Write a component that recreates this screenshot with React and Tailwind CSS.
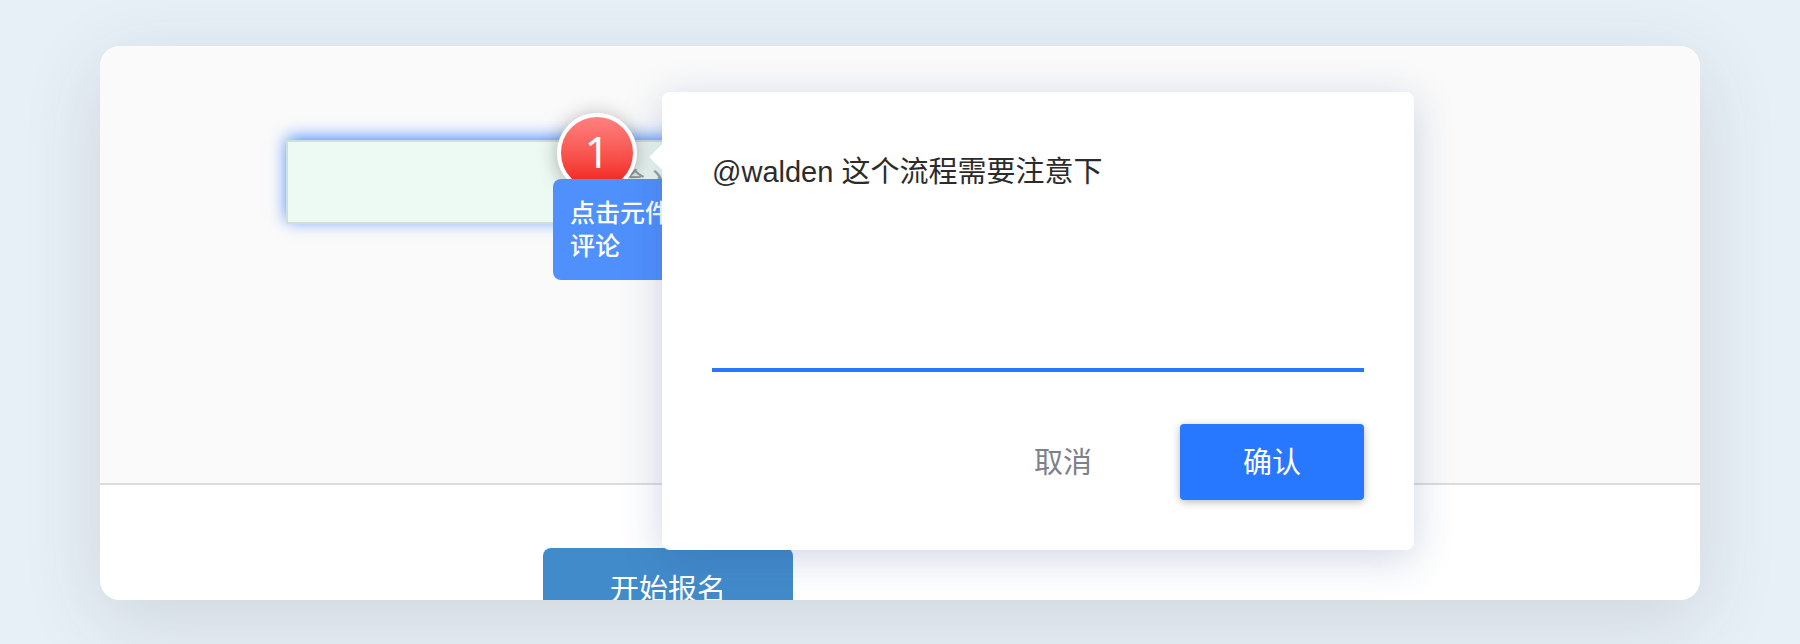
import React from 'react';

const CommentMarker = ({ count }) => (
  <div className="absolute top-[67px] left-[457px] w-20 h-20 pb-1 rounded-full border-4 border-white bg-gradient-to-b from-[#ff8080] to-[#ef0808] shadow-[0_2px_20px_rgba(0,0,0,0.3)] flex items-center justify-center">
    <span className="font-['Noto_Sans',sans-serif] text-[44px] leading-none text-white">{count}</span>
  </div>
);

const Tooltip = ({ lines }) => (
  <div className="absolute top-[133px] left-[453px] w-[180px] px-[17px] pt-[18px] pb-[17px] rounded-lg bg-[#5090fd] text-white text-[25px] leading-[33px] font-medium">
    {lines.map((line) => (
      <p key={line}>{line}</p>
    ))}
  </div>
);

const CommentDialog = () => (
  <form
    className="absolute top-[46px] left-[562px] w-[752px] p-[50px] rounded-lg bg-white shadow-[0_8px_40px_rgba(40,70,140,0.22)]"
    onSubmit={(e) => e.preventDefault()}
  >
    {/* Arrow */}
    <div className="absolute top-[56px] -left-[9px] w-[18px] h-[18px] rotate-45 bg-white" />

    <textarea
      aria-label="评论"
      defaultValue="@walden 这个流程需要注意下"
      spellCheck={false}
      className="block w-full h-[230px] pt-[10px] resize-none outline-none border-b-4 border-[#2878ff] text-[29px] leading-[40px] text-[#2b2b2b]"
    />

    <div className="flex items-center justify-end gap-[30px] mt-[52px] text-[29px] leading-[40px]">
      <button type="button" className="w-[174px] h-[76px] pt-0.5 text-[#7d818a]">
        取消
      </button>
      <button
        type="submit"
        className="w-[184px] h-[76px] pt-0.5 rounded bg-[#2878ff] text-white shadow-[0_2px_8px_rgba(0,0,0,0.28)]"
      >
        确认
      </button>
    </div>
  </form>
);

const App = () => {
  return (
    <div className="min-h-screen overflow-hidden bg-[#e8f0f7] px-[100px] pt-[46px] pb-11 font-['Liberation_Sans','Noto_Sans_CJK_SC',sans-serif]">
      <div className="rounded-[20px] shadow-[0_20px_80px_rgba(50,60,60,0.14)]">
        <main className="relative flex flex-col overflow-hidden rounded-[20px] bg-white">
          <section className="flex items-start h-[439px] pt-[94px] pl-[186px] bg-[#fafafa] border-b-2 border-[#dcdcde]">
            <input
              type="text"
              aria-label="输入"
              placeholder="请输入"
              className="w-[764px] h-[84px] pt-1 pl-[299px] border-2 border-[#d0dfd9] bg-[#edf9f3] text-[29px] placeholder:text-[#97a19c] outline-none shadow-[0_-3px_16px_-1px_rgba(40,120,255,0.9)]"
            />
          </section>

          <section className="flex items-start h-[115px] pt-[63px] pl-[443px] overflow-hidden">
            <button
              type="button"
              className="w-[250px] h-[84px] pt-0.5 rounded-lg bg-[#428bca] text-[29px] text-white"
            >
              开始报名
            </button>
          </section>

          <CommentMarker count={1} />
          <Tooltip lines={['点击元件', '评论']} />
          <CommentDialog />
        </main>
      </div>
    </div>
  );
};

export default App;
